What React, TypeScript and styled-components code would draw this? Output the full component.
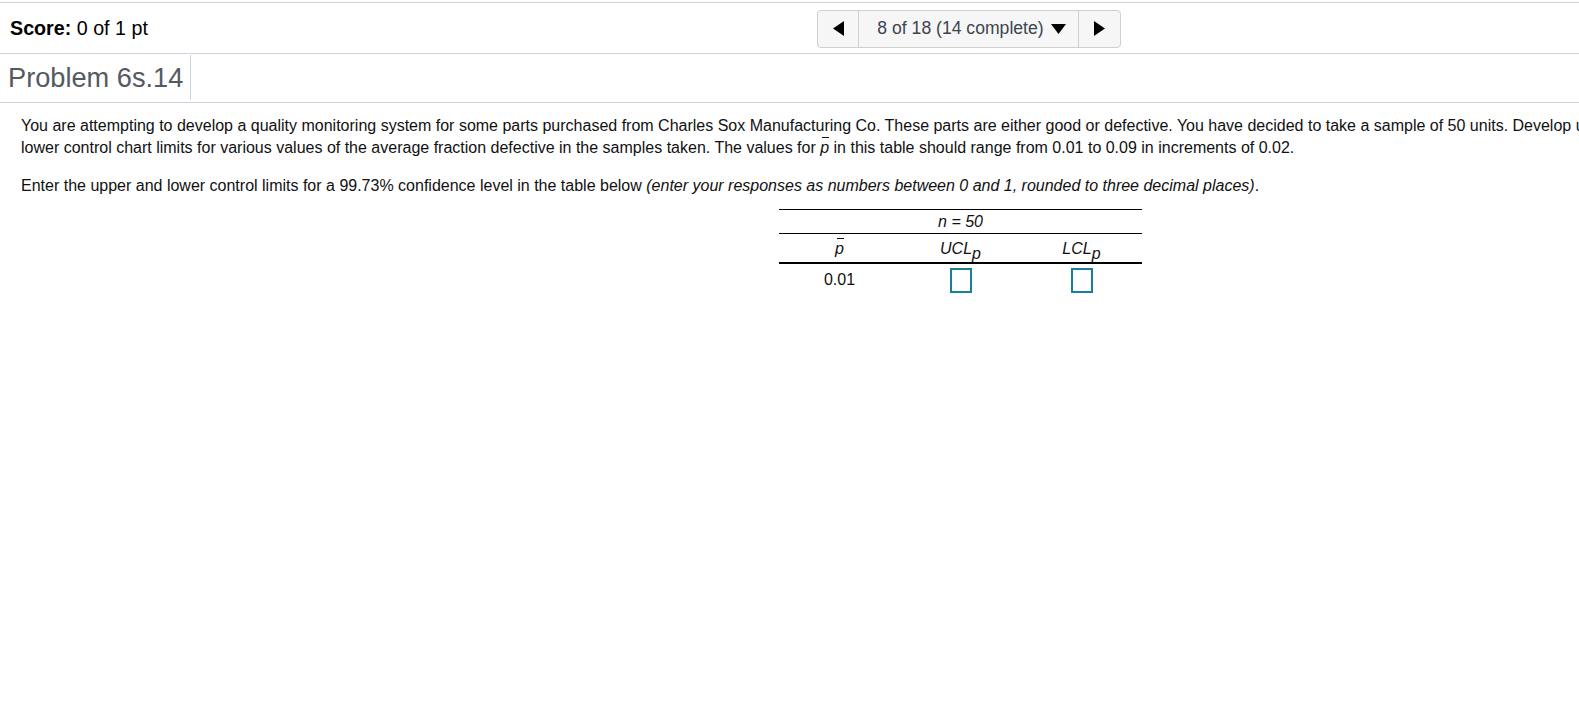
import React from "react";
import styled, { createGlobalStyle } from "styled-components";

const GlobalStyle = createGlobalStyle`
  html, body {
    margin: 0;
    padding: 0;
    background: #ffffff;
    overflow: hidden;
  }
  body {
    font-family: "Liberation Sans", Arial, Helvetica, sans-serif;
    color: #000;
  }
`;

const Page = styled.div`
  padding-top: 2px;
  width: 1579px;
  overflow: hidden;
`;

const ScoreBar = styled.div`
  display: flex;
  align-items: center;
  border-top: 1px solid #ccd3de;
  border-bottom: 1px solid #ccd3de;
  box-sizing: border-box;
  height: 52px;
`;

const Score = styled.div`
  flex: 0 0 817px;
  padding-left: 10px;
  box-sizing: border-box;
  font-size: 19.7px;
  color: #000;
  b {
    font-weight: bold;
  }
`;

const Nav = styled.div`
  display: flex;
  height: 38px;
  margin-top: 1px;
  border: 1px solid #cfcfcf;
  border-radius: 4px;
  background: #f6f6f6;
  box-sizing: border-box;
`;

const NavButton = styled.div<{ $w: number; $divider?: "left" | "right" }>`
  width: ${(p) => p.$w}px;
  display: flex;
  align-items: center;
  justify-content: center;
  box-sizing: border-box;
  ${(p) => (p.$divider === "right" ? "border-right: 1px solid #cfcfcf;" : "")}
  ${(p) => (p.$divider === "left" ? "border-left: 1px solid #cfcfcf;" : "")}
`;

const NavLabel = styled.div`
  flex: 0 0 219px;
  display: flex;
  align-items: center;
  justify-content: center;
  gap: 7px;
  font-size: 17.6px;
  color: #3c4450;
  padding-left: 6px;
  box-sizing: border-box;
`;

const TitleBar = styled.div`
  display: flex;
  height: 49px;
  border-bottom: 1px solid #ccd3de;
  box-sizing: border-box;
`;

const Title = styled.h1`
  margin: 1px 0 2px 0;
  padding: 0 7px 0 8px;
  display: flex;
  align-items: center;
  font-size: 27.2px;
  font-weight: normal;
  color: #555a60;
  border-right: 1px solid #ccd3de;
`;

const Content = styled.div`
  width: 1879px;
  padding: 12px 0 0 21px;
  font-size: 16px;
  line-height: 22px;
  color: #111;
`;

const Para = styled.p`
  margin: 0 0 16px 0;
  width: 1650px;
  &:last-of-type {
    margin-bottom: 12px;
  }
`;

const PBar = styled.span`
  position: relative;
  display: inline-block;
  font-style: italic;
  line-height: 22px;
  &::before {
    content: "";
    position: absolute;
    left: 2px;
    right: 0px;
    top: 0px;
    height: 1px;
    background: #111;
  }
`;

const TableWrap = styled.div`
  display: flex;
  justify-content: center;
  margin-top: 2px;
`;

const Table = styled.div`
  width: 363px;
  border-top: 1px solid #000;
  display: grid;
  grid-template-columns: 121px 121px 121px;
  font-size: 16px;
`;

const SpanCell = styled.div`
  grid-column: 1 / span 3;
  text-align: center;
  font-style: italic;
  height: 23px;
  line-height: 24px;
  border-bottom: 1px solid #000;
`;

const HeadCell = styled.div<{ $italic?: boolean }>`
  text-align: center;
  height: 28px;
  line-height: 30px;
  border-bottom: 2px solid #000;
  font-style: ${(p) => (p.$italic ? "italic" : "normal")};
  sub {
    font-size: 16px;
    vertical-align: -5px;
    line-height: 0;
  }
`;

const BodyCell = styled.div`
  display: flex;
  justify-content: center;
  align-items: center;
  height: 34px;
  padding-bottom: 2px;
  box-sizing: border-box;
`;

const AnswerBox = styled.input`
  width: 22px;
  height: 25px;
  box-sizing: border-box;
  border: 2px solid #1a7f99;
  padding: 0;
  margin: 0;
  background: #fff;
  outline: none;
`;

const Triangle = ({ dir }: { dir: "left" | "right" | "down" }) => {
  const pts =
    dir === "left"
      ? "11,0 11,15 0,7.5"
      : dir === "right"
      ? "0,0 0,15 11,7.5"
      : "0,0 15,0 7.5,10";
  const w = dir === "down" ? 15 : 11;
  const h = dir === "down" ? 10 : 15;
  return (
    <svg width={w} height={h} viewBox={`0 0 ${w} ${h}`}>
      <polygon points={pts} fill="#000" />
    </svg>
  );
};

export default function App() {
  return (
    <>
      <GlobalStyle />
      <Page>
        <ScoreBar>
          <Score>
            <b>Score:</b> 0 of 1 pt
          </Score>
          <Nav>
            <NavButton $w={41} $divider="right">
              <Triangle dir="left" />
            </NavButton>
            <NavLabel>
              <span>8 of 18 (14 complete)</span>
              <Triangle dir="down" />
            </NavLabel>
            <NavButton $w={42} $divider="left">
              <Triangle dir="right" />
            </NavButton>
          </Nav>
        </ScoreBar>
        <TitleBar>
          <Title>Problem 6s.14</Title>
        </TitleBar>
        <Content>
          <Para>
            You are attempting to develop a quality monitoring system for some parts purchased from Charles Sox
            Manufacturing Co. These parts are either good or defective. You have decided to take a sample of 50
            units. Develop upper and lower control chart limits for various values of the average fraction
            defective in the samples taken. The values for <PBar>p</PBar> in this table should range from 0.01 to
            0.09 in increments of 0.02.
          </Para>
          <Para>
            Enter the upper and lower control limits for a 99.73% confidence level in the table below{" "}
            <i>(enter your responses as numbers between 0 and 1, rounded to three decimal places)</i>.
          </Para>
          <TableWrap>
            <Table>
              <SpanCell>n = 50</SpanCell>
              <HeadCell $italic>
                <PBar>p</PBar>
              </HeadCell>
              <HeadCell $italic>
                UCL<sub>p</sub>
              </HeadCell>
              <HeadCell $italic>
                LCL<sub>p</sub>
              </HeadCell>
              <BodyCell>0.01</BodyCell>
              <BodyCell>
                <AnswerBox type="text" aria-label="UCL for p = 0.01" />
              </BodyCell>
              <BodyCell>
                <AnswerBox type="text" aria-label="LCL for p = 0.01" />
              </BodyCell>
            </Table>
          </TableWrap>
        </Content>
      </Page>
    </>
  );
}
